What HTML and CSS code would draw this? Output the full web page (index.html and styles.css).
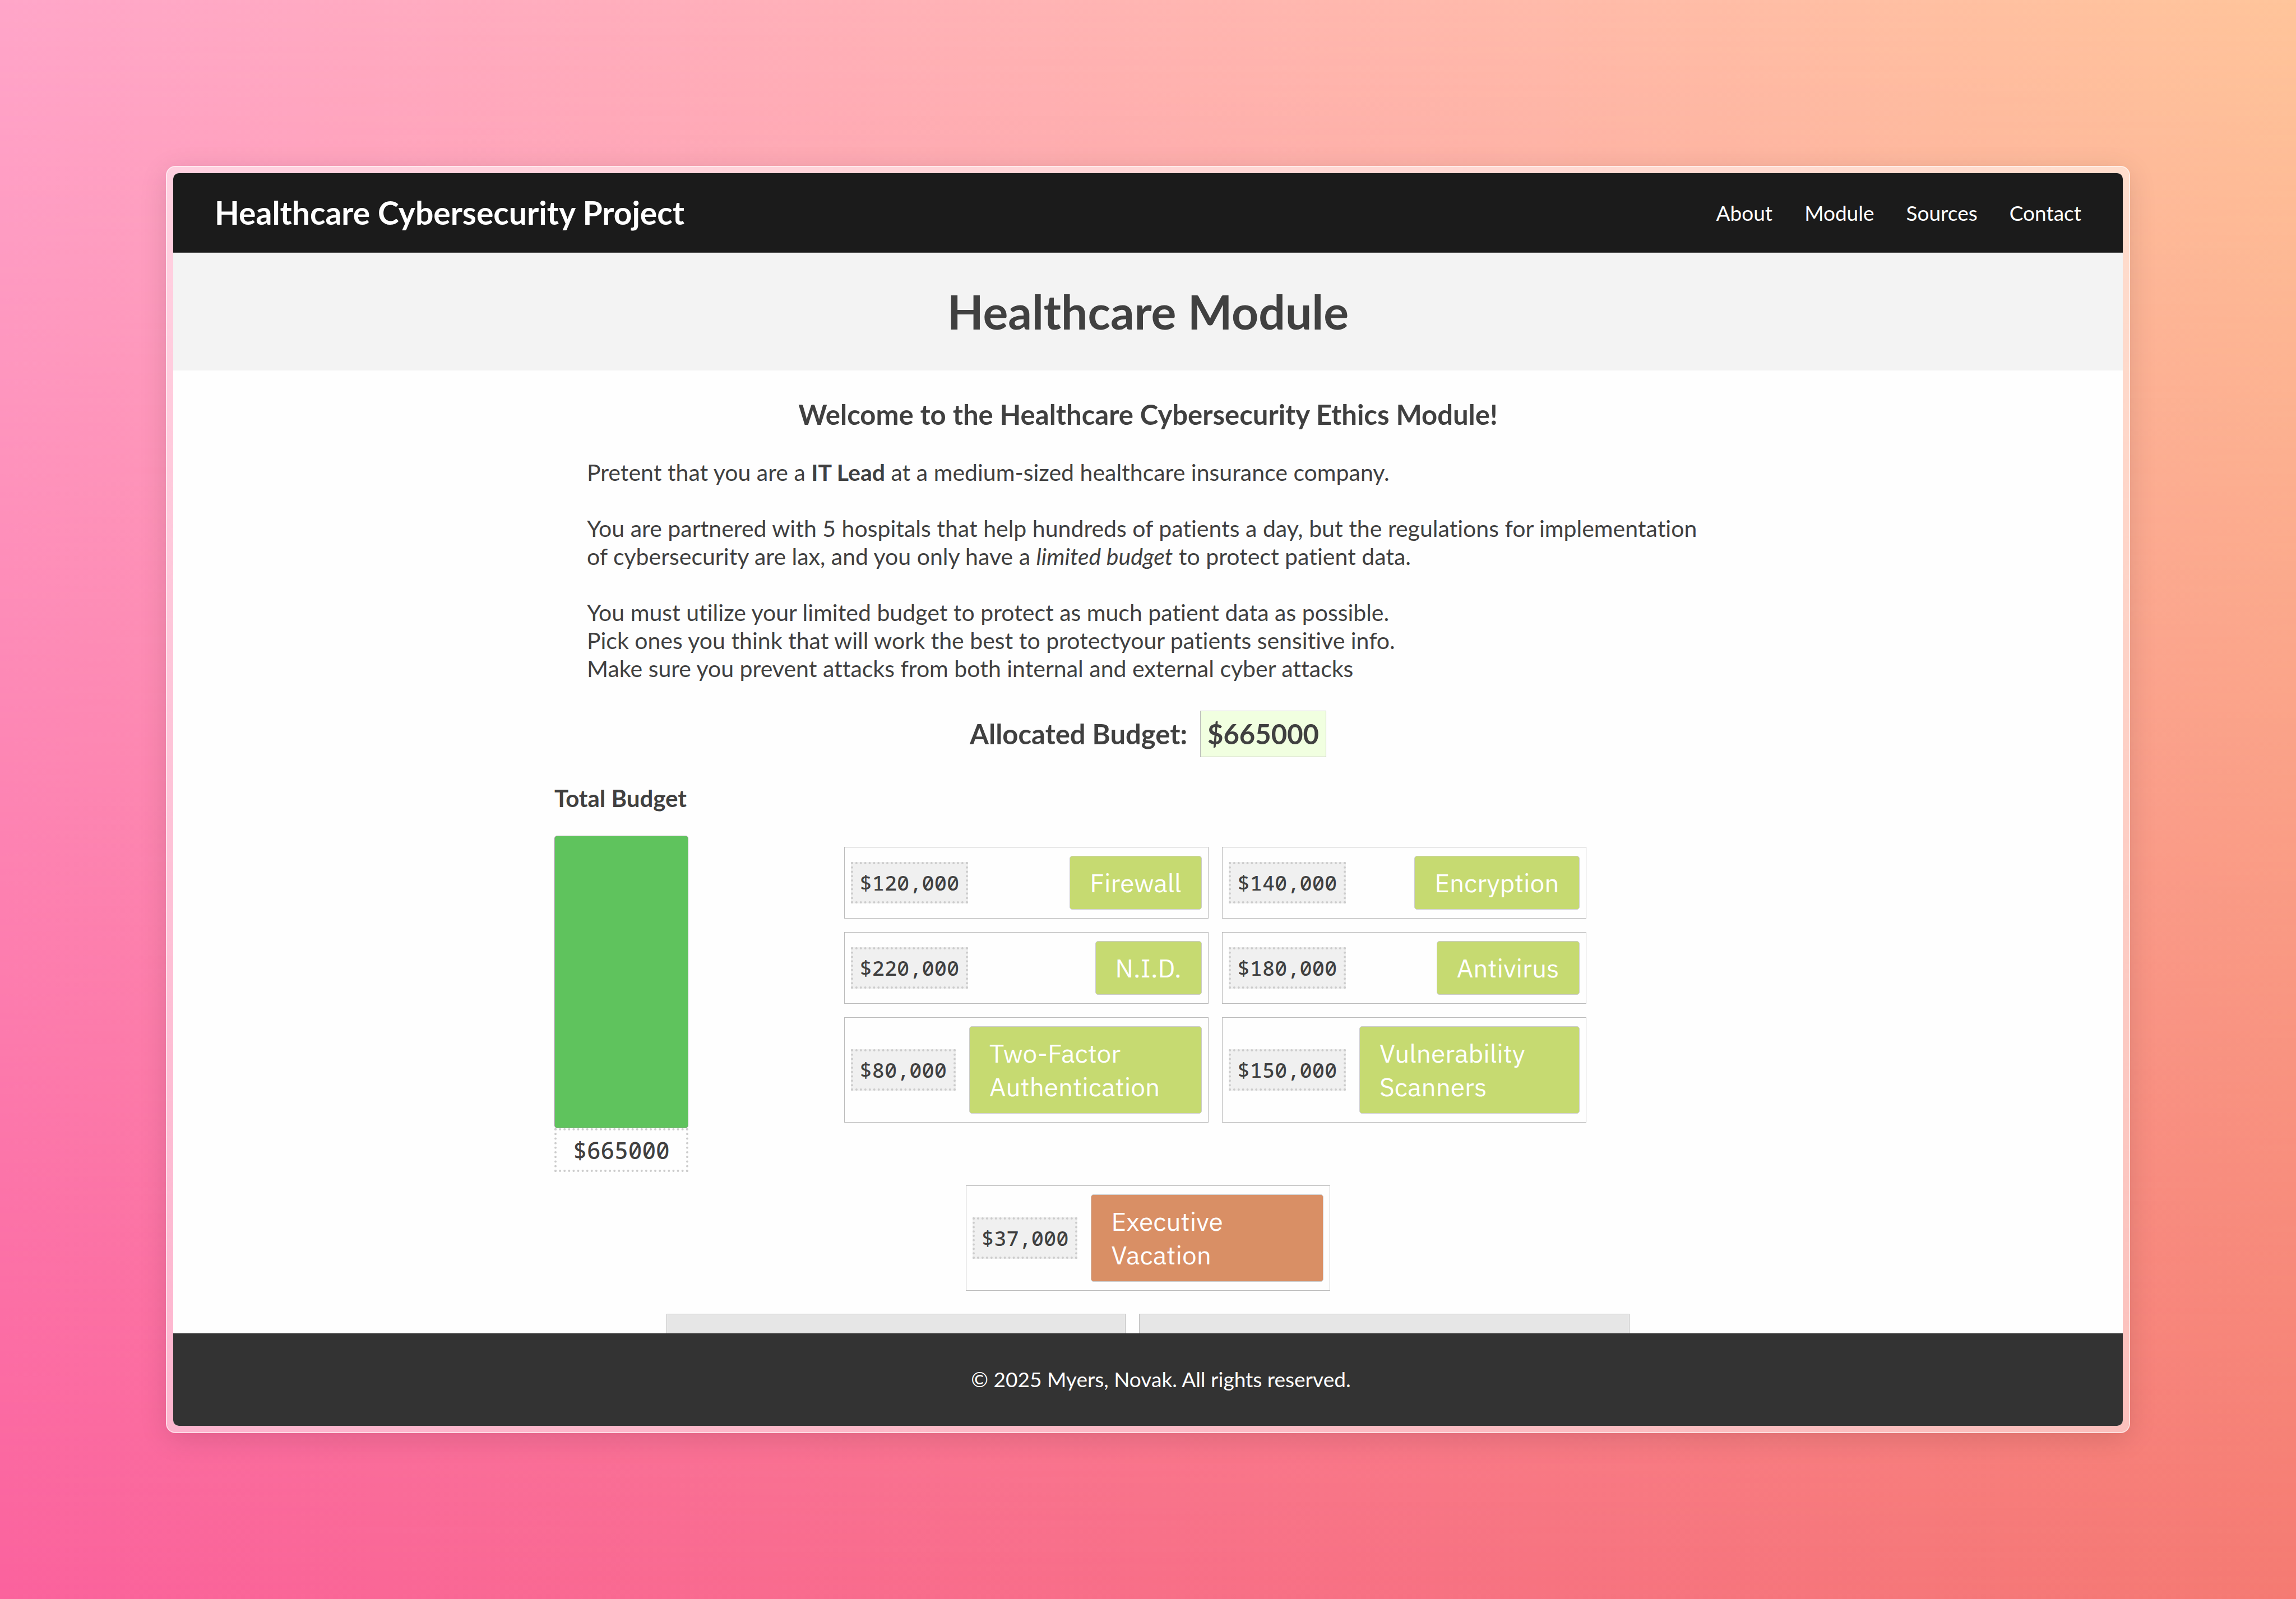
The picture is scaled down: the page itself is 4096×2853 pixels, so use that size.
FILE: index.html
```html
<!DOCTYPE html>
<html lang="en">
<head>
<meta charset="utf-8">
<meta name="viewport" content="width=device-width, initial-scale=1">
<title>Healthcare Cybersecurity Project</title>
<link rel="stylesheet" href="styles.css">
</head>
<body>
<div class="frame">
  <div class="window">
    <header class="navbar">
      <strong class="brand">Healthcare Cybersecurity Project</strong>
      <nav class="links">
        <a href="#about">About</a>
        <a href="#module">Module</a>
        <a href="#sources">Sources</a>
        <a href="#contact">Contact</a>
      </nav>
    </header>
    <main class="page">
      <div class="banner"><h1>Healthcare Module</h1></div>
      <section class="module">
        <h2 class="welcome">Welcome to the Healthcare Cybersecurity Ethics Module!</h2>
        <div class="intro">
          <p>Pretent that you are a <b>IT Lead</b> at a medium-sized healthcare insurance company.</p>
          <p>You are partnered with 5 hospitals that help hundreds of patients a day, but the regulations for implementation of cybersecurity are lax, and you only have a <i>limited budget</i> to protect patient data.</p>
          <p>You must utilize your limited budget to protect as much patient data as possible.<br>Pick ones you think that will work the best to protectyour patients sensitive info.<br>Make sure you prevent attacks from both internal and external cyber attacks</p>
        </div>
        <div class="allocated">
          <span>Allocated Budget:</span>
          <output class="amount">$665000</output>
        </div>
        <div class="workspace">
          <div class="budget">
            <h3>Total Budget</h3>
            <div class="bar"></div>
            <div class="remaining">$665000</div>
          </div>
          <div class="options">
            <div class="card"><span class="price">$120,000</span><button class="pick" type="button">Firewall</button></div>
            <div class="card"><span class="price">$140,000</span><button class="pick" type="button">Encryption</button></div>
            <div class="card"><span class="price">$220,000</span><button class="pick" type="button">N.I.D.</button></div>
            <div class="card"><span class="price">$180,000</span><button class="pick" type="button">Antivirus</button></div>
            <div class="card"><span class="price">$80,000</span><button class="pick" type="button">Two-Factor Authentication</button></div>
            <div class="card"><span class="price">$150,000</span><button class="pick" type="button">Vulnerability Scanners</button></div>
          </div>
        </div>
        <div class="card extra"><span class="price">$37,000</span><button class="pick perk" type="button">Executive Vacation</button></div>
        <div class="zones">
          <div class="zone"></div>
          <div class="zone wide"></div>
        </div>
      </section>
    </main>
    <footer class="footer">© 2025 Myers, Novak. All rights reserved.</footer>
  </div>
</div>
</body>
</html>
```
FILE: styles.css
```css
* {
  box-sizing: border-box;
}

body {
  margin: 0;
  height: 100vh;
  padding: 296px;
  font-family: Lato, "Liberation Sans", sans-serif;
  font-size: 41px;
  font-variant-ligatures: none;
  line-height: 50px;
  color: #404040;
  background: linear-gradient(to right, #ffa6c9, #ffc59b);
  position: relative;
}

/* Deeper pink-to-coral tones that grow towards the bottom edge */
body::before {
  content: "";
  position: absolute;
  inset: 0;
  background: linear-gradient(to right, #fb629d, #f57a72);
  mask-image: linear-gradient(to bottom, transparent, #000);
}

.frame {
  position: relative;
  height: 100%;
  padding: 11px;
  border: 2px solid rgba(255, 255, 255, 0.75);
  border-radius: 17px;
  background: rgba(255, 255, 255, 0.5);
  background-clip: padding-box;
  box-shadow: 0 10px 50px rgba(0, 0, 0, 0.12);
}

.window {
  display: flex;
  flex-direction: column;
  height: 100%;
  overflow: hidden;
  border-radius: 10px;
  background: #fefefe;
}

.navbar {
  flex: none;
  display: flex;
  align-items: center;
  justify-content: space-between;
  padding: 36px 74px;
  border-bottom: 1px solid #444;
  background: #1b1b1b;
  color: #fff;
}

.brand {
  font-size: 57px;
  line-height: 69px;
}

.links {
  display: flex;
  gap: 57px;
  font-size: 37px;
}

.links a {
  color: inherit;
  text-decoration: none;
}

.page {
  flex: 1;
  min-height: 0;
  overflow: hidden;
}

.banner {
  padding: 54px;
  background: #f3f3f3;
  text-align: center;
}

h1 {
  margin: 0;
  font-size: 84px;
  line-height: 102px;
}

.module {
  display: flex;
  flex-direction: column;
  align-items: center;
  padding-top: 49px;
}

.welcome {
  margin: 0 0 49px;
  font-size: 49px;
  line-height: 59px;
}

.intro {
  width: 100%;
  max-width: 2002px;
}

.intro p {
  margin: 0 0 50px;
}

.allocated {
  display: flex;
  align-items: center;
  gap: 23px;
  margin-bottom: 48px;
  font-size: 49px;
  font-weight: 700;
  line-height: 59px;
}

.amount {
  padding: 11px 12px;
  border: 1px solid #bbb;
  background: #f1ffe0;
}

.workspace {
  display: flex;
  width: 100%;
  max-width: 2118px;
  margin-bottom: 24px;
}

.budget h3 {
  margin: 0 0 42px;
  font-size: 42px;
  line-height: 50px;
}

.budget {
  flex: none;
  width: 239px;
}

.bar {
  height: 522px;
  border: 1px solid #999;
  border-radius: 5px;
  background: #5fc35d;
}

.remaining,
.price {
  padding: 12px;
  border: 4px dotted #ccc;
  font-family: "Noto Sans Mono", "DejaVu Sans Mono", monospace;
  font-weight: 500;
  text-align: center;
}

.remaining {
  font-size: 41px;
  line-height: 46px;
}

.price {
  flex: none;
  font-size: 37px;
  line-height: 42px;
  background: #f0f0f0;
}

.options {
  flex: 1;
  display: grid;
  grid-template-columns: 650px 650px;
  gap: 24px;
  place-content: center;
  padding-top: 24px;
}

.card {
  display: flex;
  align-items: center;
  justify-content: space-between;
  gap: 24px;
  padding: 15px 11px;
  border: 1px solid #bbb;
}

.extra {
  width: 650px;
  margin-bottom: 41px;
}

.pick {
  padding: 17px 35px;
  border: 1px solid #ccc;
  border-radius: 5px;
  background: #c6da71;
  color: #fff;
  font-family: "IBM Plex Sans", "Noto Sans", sans-serif;
  font-size: 46px;
  line-height: 60px;
  text-align: left;
}

.perk {
  background: #d98f65;
}

.zones {
  display: flex;
  gap: 24px;
  width: 100%;
  max-width: 1718px;
}

.zone {
  flex: 819;
  height: 400px;
  border: 1px solid #bbb;
  background: #e6e6e6;
}

.wide {
  flex-grow: 875;
}

.footer {
  flex: none;
  padding: 57px 0 58px 46px;
  background: #333;
  color: #fff;
  font-size: 37px;
  text-align: center;
}
```
